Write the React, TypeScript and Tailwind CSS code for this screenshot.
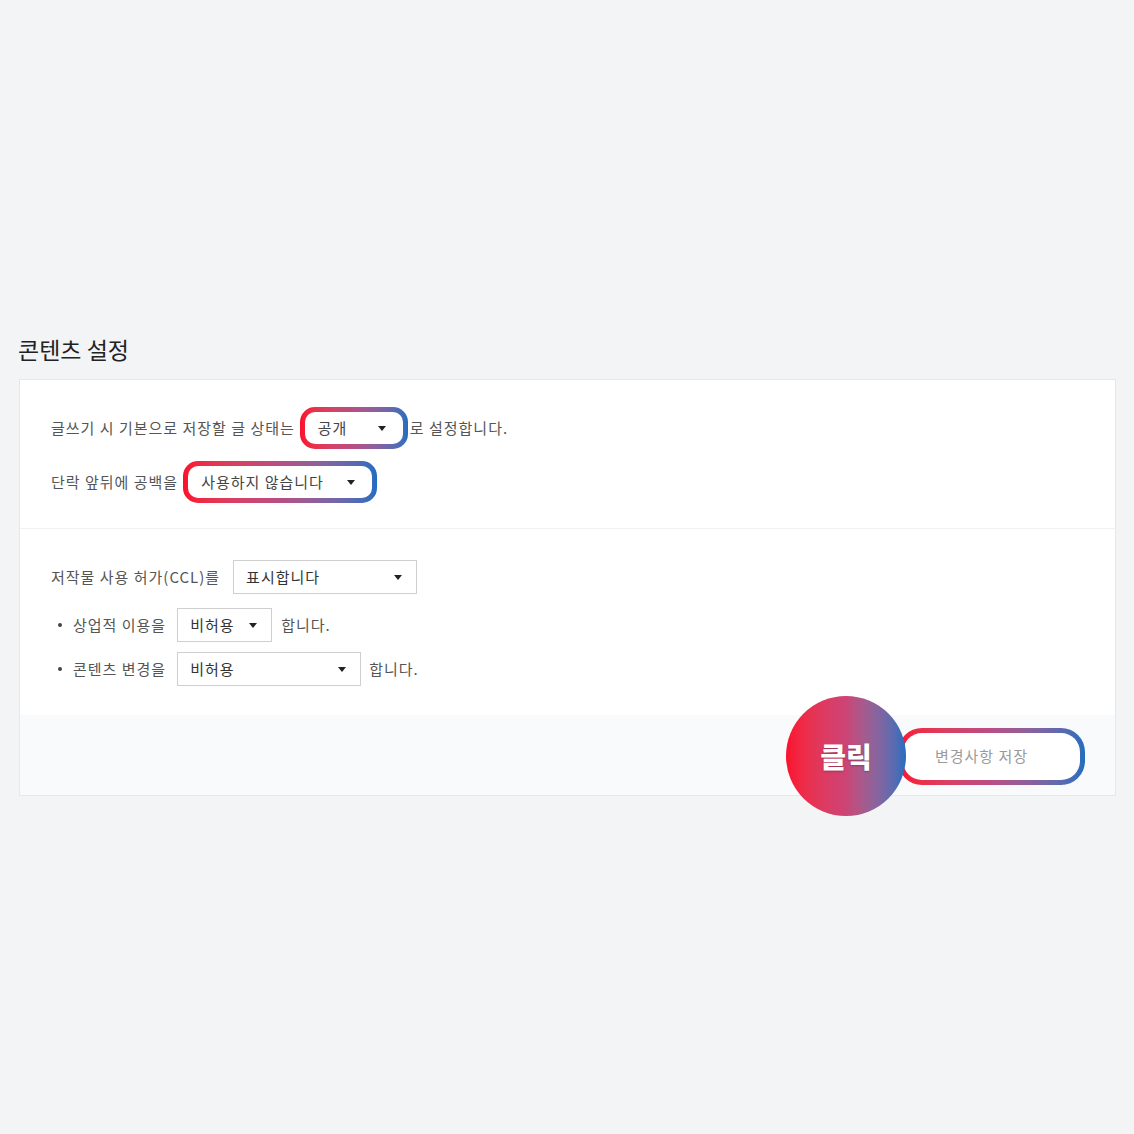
import React from "react";

const font = { fontFamily: '"Noto Sans CJK KR", "Noto Sans", sans-serif' };

function Arrow() {
  return (
    <svg width="8" height="5" viewBox="0 0 8 5" className="shrink-0">
      <path d="M0 0 L8 0 L4 5 Z" fill="#222" />
    </svg>
  );
}

function GradSelect({ label, width }: { label: string; width: string }) {
  return (
    <div className={`rounded-[15px] bg-gradient-to-r from-[#fb0f2c] via-[#b84d84] to-[#1f6dbf] p-[5px] ${width}`}>
      <div className="flex h-[32px] items-center justify-between rounded-[10px] bg-white pl-[13px] pr-[17px]">
        <span className="text-[15px] tracking-[1px] text-[#444]">{label}</span>
        <Arrow />
      </div>
    </div>
  );
}

function PlainSelect({ label, width }: { label: string; width: string }) {
  return (
    <div className={`flex h-[34px] items-center justify-between border border-[#cfcfcf] bg-white pl-[12px] pr-[14px] ${width}`}>
      <span className="text-[15px] tracking-[1px] text-[#333]">{label}</span>
      <Arrow />
    </div>
  );
}

export default function App() {
  return (
    <div className="min-h-[1134px] w-full bg-[#f3f4f6] pt-[334px]" style={font}>
      <h2 className="ml-[18px] mb-[15px] text-[23px] leading-[30px] font-normal text-[#222]">콘텐츠 설정</h2>
      <div className="ml-[19px] mr-[18px] border border-[#e6e7ea] bg-white">
        <div className="flex flex-col gap-[12px] border-b border-[#f0f1f3] pt-[27px] pb-[25px] pl-[31px] tracking-[1px]">
          <div className="flex items-center text-[15px] text-[#555]">
            <span>글쓰기 시 기본으로 저장할 글 상태는</span>
            <div className="ml-[5px] mr-[2px]">
              <GradSelect label="공개" width="w-[108px]" />
            </div>
            <span>로 설정합니다.</span>
          </div>
          <div className="flex items-center text-[15px] text-[#555]">
            <span>단락 앞뒤에 공백을</span>
            <div className="ml-[5px]">
              <GradSelect label="사용하지 않습니다" width="w-[194px]" />
            </div>
          </div>
        </div>
        <div className="flex flex-col pt-[31px] pb-[29px] pl-[31px] text-[15px] tracking-[1px] text-[#555]">
          <div className="flex items-center">
            <span>저작물 사용 허가(CCL)를</span>
            <div className="ml-[13px]">
              <PlainSelect label="표시합니다" width="w-[184px]" />
            </div>
          </div>
          <div className="mt-[14px] flex items-center">
            <span className="ml-[7px] mr-[11px] h-[4px] w-[4px] rounded-full bg-[#444]" />
            <span>상업적 이용을</span>
            <div className="ml-[11px] mr-[9px]">
              <PlainSelect label="비허용" width="w-[95px]" />
            </div>
            <span>합니다.</span>
          </div>
          <div className="mt-[10px] flex items-center">
            <span className="ml-[7px] mr-[11px] h-[4px] w-[4px] rounded-full bg-[#444]" />
            <span>콘텐츠 변경을</span>
            <div className="ml-[11px] mr-[8px]">
              <PlainSelect label="비허용" width="w-[184px]" />
            </div>
            <span>합니다.</span>
          </div>
        </div>
        <div className="flex h-[80px] items-center justify-end bg-[#f9fafb] pr-[30px] pt-[2px]">
          <div className="relative">
            <div className="rounded-[24px] bg-gradient-to-r from-[#fb0f2c] via-[#b84d84] to-[#1f6dbf] p-[5px]">
              <div className="flex h-[47px] w-[177px] items-center justify-center rounded-[19px] bg-white pr-[20px] text-[15px] tracking-[1px] text-[#9a9a9a]">
                변경사항 저장
              </div>
            </div>
            <div className="absolute left-[-112px] top-[-32px] flex h-[120px] w-[120px] items-center justify-center rounded-full bg-gradient-to-r from-[#fb0f2c] via-[#cc4476] to-[#1f6dbf]">
              <span className="text-[28px] font-black text-white leading-none" style={{ textShadow: "0 1px 2px rgba(0,0,0,0.25)" }}>클릭</span>
            </div>
          </div>
        </div>
      </div>
    </div>
  );
}
